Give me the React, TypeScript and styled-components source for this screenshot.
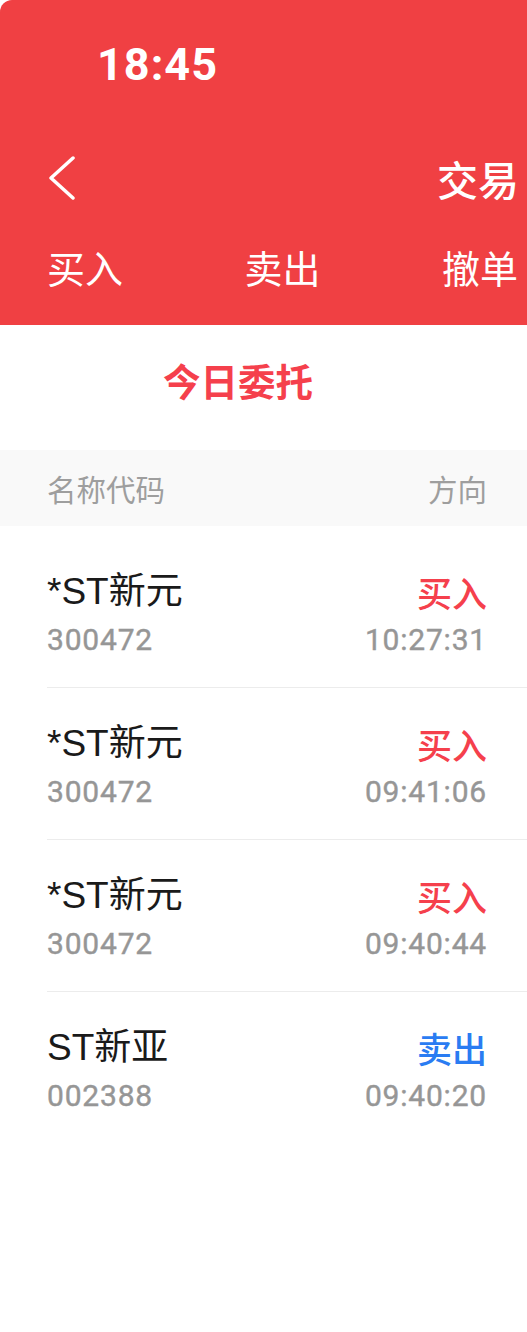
import React from "react";
import styled, { createGlobalStyle } from "styled-components";

const GlobalStyle = createGlobalStyle`
  html, body {
    margin: 0;
    padding: 0;
    background: #ffffff;
  }
  body {
    font-family: "Noto Sans", "Noto Sans CJK SC", sans-serif;
  }
`;

type Side = "buy" | "sell";

interface Order {
	name: string;
	code: string;
	side: Side;
	time: string;
}

const orders: Order[] = [
	{ name: "*ST新元", code: "300472", side: "buy", time: "10:27:31" },
	{ name: "*ST新元", code: "300472", side: "buy", time: "09:41:06" },
	{ name: "*ST新元", code: "300472", side: "buy", time: "09:40:44" },
	{ name: "ST新亚", code: "002388", side: "sell", time: "09:40:20" },
];

const sideStyles = {
	buy: { label: "买入", color: "#f5404c" },
	sell: { label: "卖出", color: "#2a7cf2" },
};

const Page = styled.div`
  width: 527px;
  min-height: 1332px;
  background: #ffffff;
  overflow: hidden;
`;

const Header = styled.header`
  background: #f04043;
  border-top-left-radius: 12px;
  color: #ffffff;
  padding-bottom: 19px;
`;

const StatusBar = styled.div`
  height: 128px;
  display: flex;
  align-items: center;
  padding-left: 97px;
`;

const Clock = styled.span`
  font-family: Roboto, "Liberation Sans", sans-serif;
  font-weight: 700;
  font-size: 45px;
  letter-spacing: 1px;
  line-height: 1;
`;

const NavBar = styled.div`
  height: 100px;
  display: flex;
  align-items: center;
  justify-content: space-between;
  padding-left: 48px;
  padding-right: 8px;
`;

const BackButton = styled.button`
  border: 0;
  background: none;
  padding: 0;
  display: flex;
  color: #ffffff;
`;

const NavTitle = styled.h1`
  margin: 0;
  font-family: "Noto Sans CJK SC", sans-serif;
  font-weight: 500;
  font-size: 41px;
  line-height: 1;
`;

const Tabs = styled.nav`
  height: 78px;
  display: flex;
  align-items: center;
  justify-content: space-between;
  padding-left: 47px;
  padding-right: 9px;
`;

const Tab = styled.span`
  font-family: "Noto Sans CJK SC", sans-serif;
  font-size: 38px;
  line-height: 1;
`;

const Section = styled.div`
  height: 125px;
  display: flex;
  align-items: center;
  padding-left: 163px;
  padding-bottom: 16px;
  box-sizing: border-box;
`;

const SectionTitle = styled.h2`
  margin: 0;
  font-family: "Noto Sans CJK SC", sans-serif;
  font-weight: 700;
  font-size: 37.5px;
  color: #f5404c;
  line-height: 1;
`;

const ListHead = styled.div`
  height: 76px;
  background: #f9f9f9;
  display: flex;
  align-items: center;
  justify-content: space-between;
  padding: 0 40px 0 47px;
  font-family: "Noto Sans CJK SC", sans-serif;
  font-size: 29.5px;
  color: #9e9e9e;
`;

const List = styled.ul`
  list-style: none;
  margin: 0;
  padding: 10px 0 0;
`;

const Row = styled.li`
  margin-left: 47px;
  padding: 34px 40px 27px 0;
  border-bottom: 1px solid #ececec;
  display: flex;
  flex-direction: column;
  gap: 6px;

  &:last-child {
    border-bottom: 0;
  }
`;

const Line = styled.div`
  display: flex;
  justify-content: space-between;
  align-items: center;
`;

const Name = styled.span`
  font-family: "Liberation Sans", "Noto Sans CJK SC", sans-serif;
  font-size: 37px;
  line-height: 44px;
  color: #1a1a1a;
`;

const Side = styled.span<{ $color: string }>`
  font-family: "Noto Sans CJK SC", sans-serif;
  font-weight: 500;
  font-size: 35px;
  line-height: 44px;
  color: ${({ $color }) => $color};
`;

const Num = styled.span`
  font-family: Roboto, "DejaVu Sans", sans-serif;
  font-weight: 400;
  font-size: 30px;
  line-height: 40px;
  color: #969696;
  letter-spacing: 0.8px;
  -webkit-text-stroke: 0.4px #969696;
`;

const Chevron = () => (
	<svg width="30" height="44" viewBox="0 0 30 44" fill="none">
		<path
			d="M25 2 L3 22 L25 42"
			stroke="currentColor"
			strokeWidth="3.5"
			strokeLinecap="round"
			strokeLinejoin="round"
		/>
	</svg>
);

export default function App() {
	return (
		<Page>
			<GlobalStyle />
			<Header>
				<StatusBar>
					<Clock>18:45</Clock>
				</StatusBar>
				<NavBar>
					<BackButton aria-label="返回">
						<Chevron />
					</BackButton>
					<NavTitle>交易</NavTitle>
				</NavBar>
				<Tabs>
					<Tab>买入</Tab>
					<Tab>卖出</Tab>
					<Tab>撤单</Tab>
				</Tabs>
			</Header>
			<Section>
				<SectionTitle>今日委托</SectionTitle>
			</Section>
			<ListHead>
				<span>名称代码</span>
				<span>方向</span>
			</ListHead>
			<List>
				{orders.map((o, i) => (
					<Row key={i}>
						<Line>
							<Name>{o.name}</Name>
							<Side $color={sideStyles[o.side].color}>
								{sideStyles[o.side].label}
							</Side>
						</Line>
						<Line>
							<Num>{o.code}</Num>
							<Num>{o.time}</Num>
						</Line>
					</Row>
				))}
			</List>
		</Page>
	);
}
